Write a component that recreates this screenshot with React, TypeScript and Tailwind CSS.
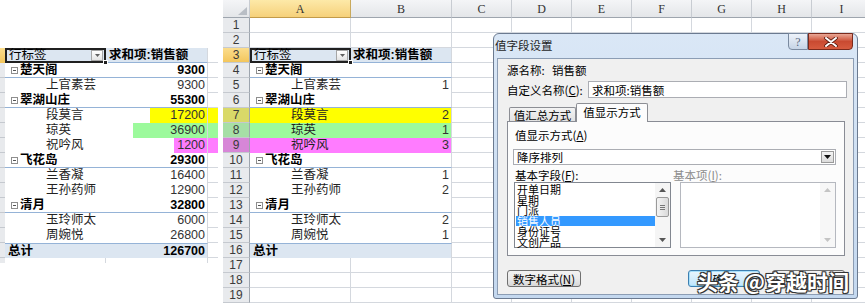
import React from "react";

interface PRow {
  kind: "group" | "item";
  name: string;
  total: string;
  rank?: string;
  hl?: "y" | "g" | "p";
}

const DATA: PRow[] = [
  { kind: "group", name: "楚天阁", total: "9300" },
  { kind: "item", name: "上官素芸", total: "9300", rank: "1" },
  { kind: "group", name: "翠湖山庄", total: "55300" },
  { kind: "item", name: "段莫言", total: "17200", rank: "2", hl: "y" },
  { kind: "item", name: "琼英", total: "36900", rank: "1", hl: "g" },
  { kind: "item", name: "祝吟风", total: "1200", rank: "3", hl: "p" },
  { kind: "group", name: "飞花岛", total: "29300" },
  { kind: "item", name: "兰香凝", total: "16400", rank: "1" },
  { kind: "item", name: "王孙药师", total: "12900", rank: "2" },
  { kind: "group", name: "清月", total: "32800" },
  { kind: "item", name: "玉玲师太", total: "6000", rank: "2" },
  { kind: "item", name: "周婉悦", total: "26800", rank: "1" },
];

const HL_CELL = { y: "bg-[#ffff00]", g: "bg-[#9cfa9c]", p: "bg-[#ff7cff]" };
const HL_HEAD = { y: "bg-[#d9d968]", g: "bg-[#a6dfa6]", p: "bg-[#d786d7]" };
const HL_LEFT = { y: "left-[150px]", g: "left-[133px]", p: "left-[174px]" };

function Collapse() {
  return (
    <span className="relative inline-block w-[7px] h-[7px] border border-[#8e8e8e] bg-white mr-[2px] shrink-0">
      <span className="absolute left-[1px] right-[1px] top-[2px] h-px bg-[#555]" />
    </span>
  );
}

function PivotName({ row }: { row: PRow }) {
  return row.kind === "group" ? (
    <div className="flex items-center h-full pl-[6px] font-bold text-black">
      <Collapse />
      <span>{row.name}</span>
    </div>
  ) : (
    <div className="h-full pl-[41px] text-[#222]">{row.name}</div>
  );
}

function SelCell() {
  return (
    <div className="relative w-[101px] h-full shrink-0 border-2 border-[#202020] bg-[#dce6f1] pl-[2px] leading-[11px] text-black">
      行标签
      <span className="absolute right-[1px] top-0 w-[12px] h-[11px] border border-[#a6a6a6] bg-gradient-to-b from-white to-[#e4e4e4] flex items-center justify-center">
        <svg width="5" height="3" viewBox="0 0 5 3">
          <path d="M0 0H5L2.5 3Z" fill="#606060" />
        </svg>
      </span>
      <span className="absolute -right-[4px] -bottom-[4px] w-[5px] h-[5px] bg-[#202020] border border-white z-10" />
    </div>
  );
}

function LeftPivot() {
  return (
    <div className="w-[223px] shrink-0 pt-[48px] flex flex-col text-[12.5px] leading-[14px]">
      <div className="flex h-[15px]">
        <div className="w-[5px] h-full shrink-0 bg-gradient-to-b from-[#fbdd8c] to-[#f3c65c]" />
        <SelCell />
        <div className="w-[102px] h-full shrink-0 bg-[#dce6f1] border-r border-b border-r-[#d4d8de] border-b-[#95b3d7] pl-[3px] font-bold text-black">
          求和项:销售额
        </div>
        <div className="w-[10px] h-full shrink-0 border-b border-b-[#d4d8de]" />
      </div>
      {DATA.map((r, i) => {
        const g = r.kind === "group";
        return (
          <div key={i} className="relative flex h-[15px]">
            {r.hl && <div className={`absolute top-0 bottom-0 right-[5px] ${HL_LEFT[r.hl]} ${HL_CELL[r.hl]}`} />}
            <div className="w-[5px] h-full shrink-0 bg-[#e8eaed] border-b border-b-[#c5c9cf]" />
            <div className={`w-[101px] h-full shrink-0 ${g ? "border-b border-b-[#95b3d7]" : ""}`}>
              <PivotName row={r} />
            </div>
            <div
              className={`relative w-[102px] h-full shrink-0 border-r border-r-[#d4d8de] text-right pr-[2px] ${
                g ? "border-b border-b-[#95b3d7] font-bold text-black" : "text-[#333]"
              }`}
            >
              {r.total}
            </div>
            <div className="w-[10px] h-full shrink-0 border-b border-b-[#d4d8de]" />
          </div>
        );
      })}
      <div className="flex h-[15px]">
        <div className="w-[5px] h-full shrink-0 bg-[#e8eaed] border-b border-b-[#c5c9cf]" />
        <div className="w-[101px] h-full shrink-0 bg-[#dce6f1] border-t border-t-[#95b3d7] pl-[3px] font-bold text-black">总计</div>
        <div className="w-[102px] h-full shrink-0 bg-[#dce6f1] border-t border-t-[#95b3d7] border-r border-r-[#d4d8de] text-right pr-[2px] font-bold text-black">
          126700
        </div>
        <div className="w-[10px] h-full shrink-0 border-b border-b-[#d4d8de]" />
      </div>
      <div className="flex h-[5px]">
        <div className="w-[5px] h-full shrink-0 bg-[#e8eaed]" />
        <div className="w-[101px] h-full shrink-0 border-r border-r-[#d4d8de]" />
        <div className="w-[102px] h-full shrink-0 border-r border-r-[#d4d8de]" />
      </div>
    </div>
  );
}

function RowHead({ n }: { n: number }) {
  const bg =
    n === 3
      ? "bg-gradient-to-b from-[#fbdd8c] to-[#f3c65c]"
      : n === 7
      ? HL_HEAD.y
      : n === 8
      ? HL_HEAD.g
      : n === 9
      ? HL_HEAD.p
      : "bg-[#e8eaed]";
  return (
    <div
      className={`w-[27px] h-full shrink-0 flex items-center justify-center border-r border-b border-r-[#9ea5ae] border-b-[#c5c9cf] ${bg} text-[12px] text-[#3a3a3a] font-['Liberation_Sans',sans-serif]`}
    >
      {n}
    </div>
  );
}

function CI() {
  return (
    <>
      {["C", "D", "E", "F", "G", "H", "I"].map((c) => (
        <div key={c} className="w-[60px] h-full shrink-0 border-r border-b border-r-[#d4d8de] border-b-[#d4d8de]" />
      ))}
    </>
  );
}

function SheetRow({ n }: { n: number }) {
  let a: React.ReactNode;
  let b: React.ReactNode;
  if (n === 3) {
    a = <SelCell />;
    b = (
      <div className="w-[101px] h-full shrink-0 bg-[#dce6f1] border-r border-b border-r-[#d4d8de] border-b-[#95b3d7] pl-[2px] font-bold text-black">
        求和项:销售额
      </div>
    );
  } else if (n >= 4 && n <= 15) {
    const r = DATA[n - 4];
    const g = r.kind === "group";
    const bg = r.hl ? HL_CELL[r.hl] : "";
    a = (
      <div className={`w-[101px] h-full shrink-0 ${bg} ${g ? "border-b border-b-[#95b3d7]" : ""}`}>
        <PivotName row={r} />
      </div>
    );
    b = (
      <div
        className={`w-[101px] h-full shrink-0 border-r border-r-[#d4d8de] ${bg} ${
          g ? "border-b border-b-[#95b3d7]" : ""
        } text-right pr-[2px] text-[#333]`}
      >
        {r.rank ?? ""}
      </div>
    );
  } else if (n === 16) {
    a = <div className="w-[101px] h-full shrink-0 bg-[#dce6f1] border-t border-t-[#95b3d7] pl-[3px] font-bold text-black">总计</div>;
    b = <div className="w-[101px] h-full shrink-0 bg-[#dce6f1] border-t border-t-[#95b3d7] border-r border-r-[#d4d8de]" />;
  } else {
    a = <div className="w-[101px] h-full shrink-0 border-r border-b border-r-[#d4d8de] border-b-[#d4d8de]" />;
    b = <div className="w-[101px] h-full shrink-0 border-r border-b border-r-[#d4d8de] border-b-[#d4d8de]" />;
  }
  return (
    <div className="flex h-[15px] leading-[14px] text-[12.5px]">
      <RowHead n={n} />
      {a}
      {b}
      <CI />
    </div>
  );
}

function ColHead({ children, active, w }: { children: React.ReactNode; active?: boolean; w: string }) {
  return (
    <div
      className={`${w} h-full shrink-0 flex items-center justify-center border-r border-b text-[12px] text-[#333] font-['Liberation_Serif',serif] ${
        active
          ? "bg-gradient-to-b from-[#fde9a8] to-[#f6d17a] border-r-[#c9a95c] border-b-[#c29b4a]"
          : "bg-gradient-to-b from-[#f4f5f7] to-[#e4e6e9] border-r-[#c8ccd2] border-b-[#9ea5ae]"
      }`}
    >
      {children}
    </div>
  );
}

function UpArrow({ color }: { color: string }) {
  return (
    <svg width="7" height="4" viewBox="0 0 7 4">
      <path d="M0 4L3.5 0L7 4Z" fill={color} />
    </svg>
  );
}
function DownArrow({ color }: { color: string }) {
  return (
    <svg width="7" height="4" viewBox="0 0 7 4">
      <path d="M0 0L7 0L3.5 4Z" fill={color} />
    </svg>
  );
}

function Btn({ children, w, ml, focus }: { children: React.ReactNode; w: string; ml?: string; focus?: boolean }) {
  return (
    <div
      className={`${w} ${ml ?? ""} h-full shrink-0 flex items-center justify-center rounded-[3px] border ${
        focus
          ? "border-[#3c7fb1] shadow-[inset_0_0_0_1px_#a7e0fb] bg-gradient-to-b from-[#eaf6fd] to-[#bee6fd]"
          : "border-[#707070] bg-gradient-to-b from-[#f2f2f2] via-[#ebebeb] to-[#d8d8d8]"
      } text-black`}
    >
      {children}
    </div>
  );
}

function Dialog() {
  const items = ["开单日期", "星期", "门派", "销售人员", "身份证号", "文创产品"];
  return (
    <div className="absolute left-[270px] top-[33px] w-[365px] h-[266px] flex flex-col rounded-t-[6px] rounded-b-[3px] border border-[#6b7a90] bg-gradient-to-b from-[#dae7f6] via-[#cfe0f3] to-[#c4d8ef] font-['Noto_Sans_CJK_SC',sans-serif]">
      <div className="h-[24px] flex items-center pl-[1px] text-[11.5px] text-[#1e1e1e]">值字段设置</div>
      <div className="absolute -top-px right-[4px] flex">
        <div className="w-[20px] h-[17px] rounded-bl-[4px] border border-[#7a8aa0] bg-gradient-to-b from-[#eef3fa] to-[#c6d4e6] flex items-center justify-center text-[12px] leading-none text-[#56677d] font-['Liberation_Serif',serif]">
          ?
        </div>
        <div className="w-[45px] h-[17px] rounded-br-[4px] border border-[#7a2a1c] bg-gradient-to-b from-[#e9a796] via-[#c94a31] to-[#d65b3f] flex items-center justify-center">
          <svg width="14" height="10" viewBox="0 0 14 10">
            <path d="M2 1L12 9M12 1L2 9" stroke="#5a1a10" strokeWidth="3.6" strokeLinecap="round" />
            <path d="M2 1L12 9M12 1L2 9" stroke="#ffffff" strokeWidth="2" strokeLinecap="round" />
          </svg>
        </div>
      </div>
      <div className="flex-1 mx-[3px] mb-[3px] border border-[#8c9db4] bg-[#f0f0f0] flex flex-col pl-[9px] pt-[4px] text-[11.5px] text-black leading-[14px]">
        <div className="h-[14px] flex items-center">
          <span className="w-[45px] shrink-0">源名称:</span>
          <span>销售额</span>
        </div>
        <div className="mt-[4px] h-[17px] flex items-center">
          <span className="w-[81px] shrink-0">
            自定义名称(<u>C</u>):
          </span>
          <div className="w-[259px] h-[17px] border border-[#abadb3] bg-white px-[3px] flex items-center">求和项:销售额</div>
        </div>
        <div className="relative z-10 mt-[5px] h-[18px] flex items-end">
          <div className="ml-[2px] w-[67px] h-[14px] border border-b-0 border-[#8c8e94] rounded-t-[2px] bg-gradient-to-b from-[#f3f3f3] to-[#e2e2e2] flex items-center justify-center">
            值汇总方式
          </div>
          <div className="w-[72px] h-[19px] -mb-px border border-b-0 border-[#8c8e94] rounded-t-[2px] bg-[#fcfcfc] flex items-center justify-center pb-[2px]">
            值显示方式
          </div>
        </div>
        <div className="w-[338px] h-[135px] border border-[#898c95] bg-[#fcfcfc] flex flex-col">
          <div className="mt-[6px] h-[14px] pl-[7px]">
            值显示方式(<u>A</u>)
          </div>
          <div className="relative mt-[7px] ml-[5px] w-[323px] h-[16px] border border-[#abadb3] bg-white pl-[3px] flex items-center">
            降序排列
            <span className="absolute right-[1px] top-[1px] bottom-[1px] w-[13px] border border-[#9a9a9a] bg-gradient-to-b from-[#f4f4f4] to-[#dcdcdc] flex items-center justify-center">
              <DownArrow color="#111" />
            </span>
          </div>
          <div className="mt-[3px] h-[14px] flex">
            <span className="w-[165px] pl-[7px] shrink-0">
              基本字段(<u>F</u>):
            </span>
            <span className="text-[#8d8d8d]">
              基本项(<u>I</u>):
            </span>
          </div>
          <div className="h-[66px] flex">
            <div className="ml-[6px] w-[157px] h-full border border-[#828790] bg-white flex">
              <div className="flex-1 pt-[1px] pl-[1px] text-[11px]">
                {items.map((it) => (
                  <div
                    key={it}
                    className={`h-[10.5px] leading-[10.5px] pl-[1px] whitespace-nowrap ${
                      it === "销售人员" ? "bg-[#3399ff] text-white" : ""
                    }`}
                  >
                    {it}
                  </div>
                ))}
              </div>
              <div className="w-[15px] h-full shrink-0 bg-[#f5f5f5] flex flex-col items-center">
                <div className="h-[14px] w-full flex items-center justify-center">
                  <UpArrow color="#555" />
                </div>
                <div className="w-[13px] h-[20px] rounded-[2px] border border-[#9a9a9a] bg-gradient-to-r from-[#f4f4f4] to-[#dadada] flex flex-col items-center justify-center gap-[1px]">
                  <span className="w-[5px] h-px bg-[#777]" />
                  <span className="w-[5px] h-px bg-[#777]" />
                  <span className="w-[5px] h-px bg-[#777]" />
                </div>
                <div className="flex-1" />
                <div className="h-[14px] w-full flex items-center justify-center">
                  <DownArrow color="#555" />
                </div>
              </div>
            </div>
            <div className="ml-[9px] w-[156px] h-full border border-[#b5b8bf] bg-white flex">
              <div className="flex-1" />
              <div className="w-[15px] h-full shrink-0 bg-[#f7f7f7] flex flex-col">
                <div className="h-[14px] w-full flex items-center justify-center">
                  <UpArrow color="#c4c4c4" />
                </div>
                <div className="flex-1" />
                <div className="h-[14px] w-full flex items-center justify-center">
                  <DownArrow color="#c4c4c4" />
                </div>
              </div>
            </div>
          </div>
        </div>
        <div className="mt-[14px] h-[17px] flex">
          <Btn w="w-[74px]">
            数字格式(<u>N</u>)
          </Btn>
          <Btn w="w-[72px]" ml="ml-[107px]" focus>
            确定
          </Btn>
          <Btn w="w-[73px]" ml="ml-[12px]">
            取消
          </Btn>
        </div>
      </div>
    </div>
  );
}

function Sheet() {
  return (
    <div className="relative flex-1 overflow-hidden">
      <div className="flex h-[18px]">
        <div className="relative w-[27px] h-full shrink-0 border-r border-b border-r-[#c8ccd2] border-b-[#9ea5ae] bg-gradient-to-b from-[#f4f5f7] to-[#e4e6e9]">
          <svg className="absolute right-[2px] bottom-[2px]" width="9" height="8" viewBox="0 0 9 8">
            <path d="M9 0V8H0Z" fill="#b9bec5" />
          </svg>
        </div>
        <ColHead w="w-[101px]" active>
          A
        </ColHead>
        <ColHead w="w-[101px]">B</ColHead>
        <ColHead w="w-[60px]">C</ColHead>
        <ColHead w="w-[60px]">D</ColHead>
        <ColHead w="w-[60px]">E</ColHead>
        <ColHead w="w-[60px]">F</ColHead>
        <ColHead w="w-[60px]">G</ColHead>
        <ColHead w="w-[60px]">H</ColHead>
        <ColHead w="w-[60px]">I</ColHead>
      </div>
      {Array.from({ length: 19 }, (_, i) => (
        <SheetRow key={i} n={i + 1} />
      ))}
      <Dialog />
    </div>
  );
}

export default function App() {
  return (
    <div className="relative flex w-[865px] h-[304px] overflow-hidden bg-white font-['Liberation_Sans','Noto_Sans_CJK_SC',sans-serif]">
      <LeftPivot />
      <Sheet />
      <div className="absolute left-[697px] top-[268px] text-[21px] leading-[26px] text-white font-bold whitespace-nowrap font-['Noto_Sans_CJK_SC',sans-serif] [text-shadow:-1px_-1px_0_#333,1px_-1px_0_#333,-1px_1px_0_#333,1px_1px_0_#333,0_0_2px_#000]">
        头条 @穿越时间
      </div>
    </div>
  );
}
